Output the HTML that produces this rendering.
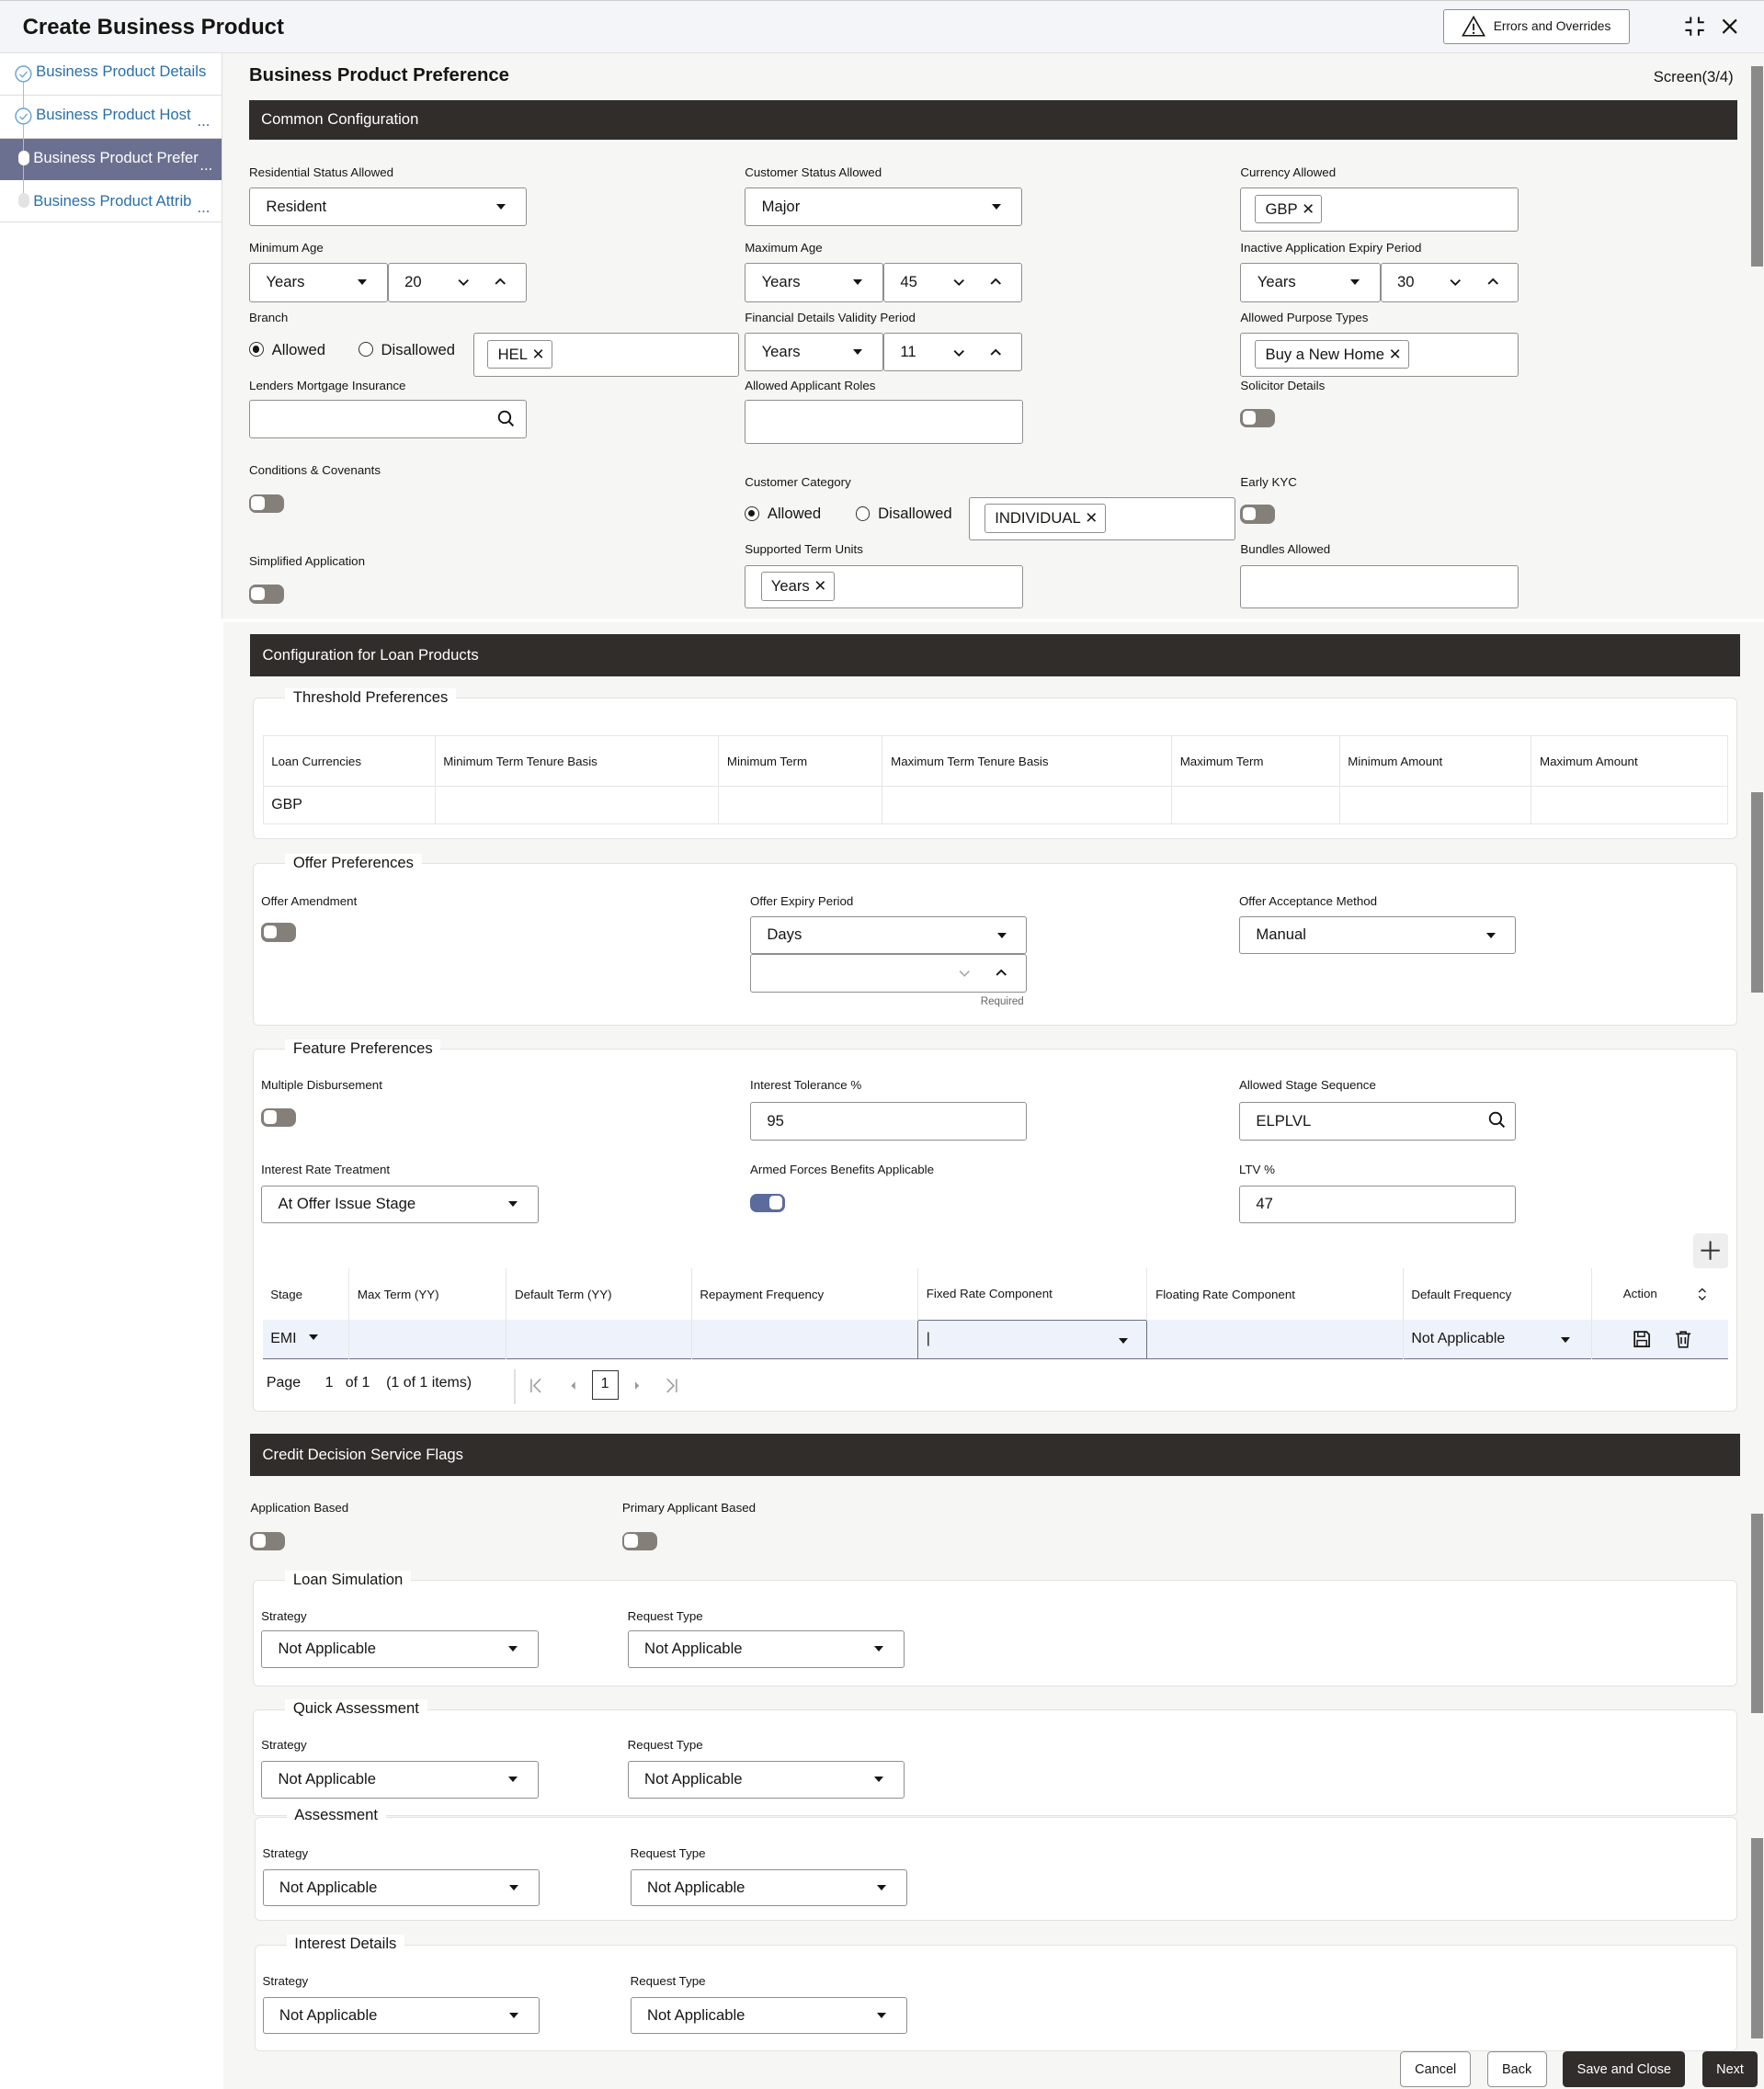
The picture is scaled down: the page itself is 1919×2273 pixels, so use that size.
<!DOCTYPE html>
<html><head><meta charset="utf-8">
<style>
*{box-sizing:border-box;margin:0;padding:0}
html,body{width:1919px;height:2273px;overflow:hidden;background:#fff}
#root{zoom:1.4494;width:1324px;height:1569px;position:relative;font-family:"Liberation Sans",sans-serif;color:#161513}
.a{position:absolute}
.lbl{position:absolute;font-size:9.2px;color:#161513;white-space:nowrap}
.box{position:absolute;background:#fff;border:1px solid #8f8f8f;border-radius:2px;font-size:11.5px;color:#161513;padding-left:12px;display:flex;align-items:center;white-space:nowrap}
.caret{position:absolute;top:50%;margin-top:-2px;width:0;height:0;border-left:3.5px solid transparent;border-right:3.5px solid transparent;border-top:4.5px solid #161513}
.tog{position:absolute;width:26px;height:14px;border-radius:5px;background:#857f7a;border:1px solid #857f7a}
.tog::after{content:"";position:absolute;left:1px;top:1px;width:10px;height:10px;border-radius:3px;background:#fff}
.tog.on{background:#5b6b9e;border-color:#5b6b9e}
.tog.on::after{left:auto;right:1px}
.bar{position:absolute;background:#312d2a;color:#fff;font-size:11.5px;padding-left:9px;display:flex;align-items:center}
.chip{position:absolute;border:1px solid #8f8f8f;border-radius:2px;background:#fff;font-size:11.5px;padding:0 5px 0 7px;display:flex;align-items:center;height:22px;white-space:nowrap}
.fs{position:absolute;border:1px solid #e2e2e2;border-radius:4px;background:#fff}
.leg{position:absolute;font-size:11.5px;background:#fff;padding:0 6px;white-space:nowrap;color:#161513}
.radio{position:absolute;width:11px;height:11px;border:1px solid #333;border-radius:50%;background:#fff}
.radio.on::after{content:"";position:absolute;left:2px;top:2px;width:5px;height:5px;border-radius:50%;background:#161513}
.rt{position:absolute;font-size:11.5px;color:#161513;white-space:nowrap}
.ch{position:absolute;top:50%;margin-top:-4px}
table{border-collapse:collapse;position:absolute;font-size:9.2px}
td{border-left:1px solid #e6e6e6;padding-left:6px;white-space:nowrap}
.btn{position:absolute;border:1px solid #8f8f8f;border-radius:3px;background:#fff;font-size:10px;display:flex;align-items:center;justify-content:center}
.btn.dk{background:#312d2a;color:#fff;border-color:#312d2a}
.sb{position:absolute;left:1314px;width:9px;background:#8a8a8a}
</style></head><body><div id="root">

<!-- header -->
<div class="a" style="left:0;top:0;width:1324px;height:40px;background:#f4f5f8;border-bottom:1px solid #e0e0e0;border-top:1px solid #ccc"></div>
<div class="a" style="left:17px;top:11px;font-size:16.5px;font-weight:bold">Create Business Product</div>
<div class="btn" style="left:1083px;top:7px;width:140px;height:26px;font-size:9.5px;border-radius:2px">
<svg width="18" height="16" viewBox="0 0 18 16" style="margin-right:6px"><path d="M9 1 L17 15 H1 Z" fill="none" stroke="#161513" stroke-width="1.1"/><line x1="9" y1="6" x2="9" y2="11" stroke="#161513" stroke-width="1.2"/><circle cx="9" cy="13" r="0.8" fill="#161513"/></svg>Errors and Overrides</div>
<svg class="a" style="left:1264px;top:12px" width="16" height="16" viewBox="0 0 16 16"><path d="M5 1v4H1M11 1v4h4M5 15v-4H1M11 15v-4h4" fill="none" stroke="#161513" stroke-width="1.4"/></svg>
<svg class="a" style="left:1292px;top:14px" width="12" height="12" viewBox="0 0 12 12"><path d="M1 1L11 11M11 1L1 11" stroke="#161513" stroke-width="1.5"/></svg>

<!-- sidebar -->
<div class="a" style="left:0;top:40px;width:167px;height:424px;background:#fff;border-right:1px solid #ddd"></div>
<div class="a" style="left:0;top:40px;width:166px;height:32px;border-bottom:1px solid #ddd"></div>
<div class="a" style="left:0;top:72px;width:166px;height:32px;border-bottom:1px solid #ddd"></div>
<div class="a" style="left:0;top:104px;width:166px;height:31px;background:#6c7090"></div>
<div class="a" style="left:0;top:135px;width:166px;height:32px;border-bottom:1px solid #ddd"></div>
<div class="a" style="left:17px;top:60px;width:1px;height:90px;background:#9fbfe0"></div>
<svg class="a" style="left:11px;top:49px" width="13" height="13" viewBox="0 0 13 13"><circle cx="6.5" cy="6.5" r="5.8" fill="#fff" stroke="#6aa3d3"/><path d="M3.8 6.8l2 2 3.6-4" fill="none" stroke="#6aa3d3" stroke-width="0.9"/></svg>
<svg class="a" style="left:11px;top:81px" width="13" height="13" viewBox="0 0 13 13"><circle cx="6.5" cy="6.5" r="5.8" fill="#fff" stroke="#6aa3d3"/><path d="M3.8 6.8l2 2 3.6-4" fill="none" stroke="#6aa3d3" stroke-width="0.9"/></svg>
<div class="a" style="left:14px;top:113px;width:8px;height:11px;border-radius:4px;background:#fff"></div>
<div class="a" style="left:14px;top:145px;width:8px;height:11px;border-radius:4px;background:#e3e3e3"></div>
<div class="a" style="left:27px;top:47px;font-size:11.5px;color:#2a6fa8">Business Product Details</div>
<div class="a" style="left:27px;top:79px;font-size:11.5px;color:#2a6fa8">Business Product Host</div>
<div class="a" style="left:148px;top:84px;font-size:11.5px;color:#2a6fa8">...</div>
<div class="a" style="left:25px;top:112px;font-size:11.5px;color:#fff">Business Product Prefer</div>
<div class="a" style="left:150px;top:117px;font-size:11.5px;color:#fff">...</div>
<div class="a" style="left:25px;top:144px;font-size:11.5px;color:#2a6fa8">Business Product Attrib</div>
<div class="a" style="left:148px;top:149px;font-size:11.5px;color:#2a6fa8">...</div>

<!-- content bg -->
<div class="a" style="left:167px;top:40px;width:1157px;height:424px;background:#f6f6f5"></div>
<div class="a" style="left:168px;top:467px;width:1156px;height:1102px;background:#f6f6f5"></div>

<div class="a" style="left:187px;top:49px;font-size:14px;font-weight:bold">Business Product Preference</div>
<div class="a" style="left:1241px;top:51px;font-size:11.5px">Screen(3/4)</div>

<div class="bar" style="left:187px;top:75px;width:1117px;height:30px">Common Configuration</div>

<!-- row 1 -->
<div class="lbl" style="left:187px;top:124px">Residential Status Allowed</div>
<div class="box" style="left:187px;top:141px;width:208px;height:29px">Resident<i class="caret" style="right:15px"></i></div>
<div class="lbl" style="left:559px;top:124px">Customer Status Allowed</div>
<div class="box" style="left:559px;top:141px;width:208px;height:29px">Major<i class="caret" style="right:15px"></i></div>
<div class="lbl" style="left:931px;top:124px">Currency Allowed</div>
<div class="box" style="left:931px;top:141px;width:209px;height:33px"></div>
<div class="chip" style="left:942px;top:146px">GBP&nbsp;✕</div>

<!-- row 2 -->
<div class="lbl" style="left:187px;top:181px">Minimum Age</div>
<div class="box" style="left:187px;top:197px;width:104px;height:30px">Years<i class="caret" style="right:15px"></i></div>
<div class="box" style="left:291px;top:197px;width:104px;height:30px">20<svg class="ch" style="left:51px" width="10" height="8" viewBox="0 0 10 8"><path d="M1.5 2.5L5 6 8.5 2.5" fill="none" stroke="#161513" stroke-width="1.3"/></svg><svg class="ch" style="left:79px" width="10" height="8" viewBox="0 0 10 8"><path d="M1.5 5.5L5 2 8.5 5.5" fill="none" stroke="#161513" stroke-width="1.3"/></svg></div>
<div class="lbl" style="left:559px;top:181px">Maximum Age</div>
<div class="box" style="left:559px;top:197px;width:104px;height:30px">Years<i class="caret" style="right:15px"></i></div>
<div class="box" style="left:663px;top:197px;width:104px;height:30px">45<svg class="ch" style="left:51px" width="10" height="8" viewBox="0 0 10 8"><path d="M1.5 2.5L5 6 8.5 2.5" fill="none" stroke="#161513" stroke-width="1.3"/></svg><svg class="ch" style="left:79px" width="10" height="8" viewBox="0 0 10 8"><path d="M1.5 5.5L5 2 8.5 5.5" fill="none" stroke="#161513" stroke-width="1.3"/></svg></div>
<div class="lbl" style="left:931px;top:181px">Inactive Application Expiry Period</div>
<div class="box" style="left:931px;top:197px;width:105px;height:30px">Years<i class="caret" style="right:15px"></i></div>
<div class="box" style="left:1036px;top:197px;width:104px;height:30px">30<svg class="ch" style="left:51px" width="10" height="8" viewBox="0 0 10 8"><path d="M1.5 2.5L5 6 8.5 2.5" fill="none" stroke="#161513" stroke-width="1.3"/></svg><svg class="ch" style="left:79px" width="10" height="8" viewBox="0 0 10 8"><path d="M1.5 5.5L5 2 8.5 5.5" fill="none" stroke="#161513" stroke-width="1.3"/></svg></div>

<!-- row 3 -->
<div class="lbl" style="left:187px;top:233px">Branch</div>
<div class="radio on" style="left:187px;top:257px"></div><div class="rt" style="left:204px;top:256px">Allowed</div>
<div class="radio" style="left:269px;top:257px"></div><div class="rt" style="left:286px;top:256px">Disallowed</div>
<div class="box" style="left:355px;top:250px;width:200px;height:33px"></div>
<div class="chip" style="left:366px;top:255px">HEL&nbsp;✕</div>
<div class="lbl" style="left:559px;top:233px">Financial Details Validity Period</div>
<div class="box" style="left:559px;top:250px;width:104px;height:29px">Years<i class="caret" style="right:15px"></i></div>
<div class="box" style="left:663px;top:250px;width:104px;height:29px">11<svg class="ch" style="left:51px" width="10" height="8" viewBox="0 0 10 8"><path d="M1.5 2.5L5 6 8.5 2.5" fill="none" stroke="#161513" stroke-width="1.3"/></svg><svg class="ch" style="left:79px" width="10" height="8" viewBox="0 0 10 8"><path d="M1.5 5.5L5 2 8.5 5.5" fill="none" stroke="#161513" stroke-width="1.3"/></svg></div>
<div class="lbl" style="left:931px;top:233px">Allowed Purpose Types</div>
<div class="box" style="left:931px;top:250px;width:209px;height:33px"></div>
<div class="chip" style="left:942px;top:255px">Buy a New Home&nbsp;✕</div>

<!-- row 4 -->
<div class="lbl" style="left:187px;top:284px">Lenders Mortgage Insurance</div>
<div class="box" style="left:187px;top:300px;width:208px;height:29px"></div>
<svg class="a" style="left:373px;top:308px" width="13" height="13" viewBox="0 0 13 13"><circle cx="5.5" cy="5.5" r="4.3" fill="none" stroke="#161513" stroke-width="1.3"/><path d="M8.6 8.6L12 12" stroke="#161513" stroke-width="1.4"/></svg>
<div class="lbl" style="left:559px;top:284px">Allowed Applicant Roles</div>
<div class="box" style="left:559px;top:300px;width:209px;height:33px"></div>
<div class="lbl" style="left:931px;top:284px">Solicitor Details</div>
<div class="tog" style="left:931px;top:307px"></div>

<div class="lbl" style="left:187px;top:348px">Conditions &amp; Covenants</div>
<div class="tog" style="left:187px;top:371px"></div>
<div class="lbl" style="left:559px;top:357px">Customer Category</div>
<div class="radio on" style="left:559px;top:380px"></div><div class="rt" style="left:576px;top:379px">Allowed</div>
<div class="radio" style="left:642px;top:380px"></div><div class="rt" style="left:659px;top:379px">Disallowed</div>
<div class="box" style="left:727px;top:373px;width:200px;height:33px"></div>
<div class="chip" style="left:739px;top:378px">INDIVIDUAL&nbsp;✕</div>
<div class="lbl" style="left:931px;top:357px">Early KYC</div>
<div class="tog" style="left:931px;top:379px"></div>

<div class="lbl" style="left:187px;top:416px">Simplified Application</div>
<div class="tog" style="left:187px;top:439px"></div>
<div class="lbl" style="left:559px;top:407px">Supported Term Units</div>
<div class="box" style="left:559px;top:424px;width:209px;height:33px"></div>
<div class="chip" style="left:571px;top:429px">Years&nbsp;✕</div>
<div class="lbl" style="left:931px;top:407px">Bundles Allowed</div>
<div class="box" style="left:931px;top:424px;width:209px;height:33px"></div>

<!-- Loan products -->
<div class="bar" style="left:188px;top:476px;width:1118px;height:32px">Configuration for Loan Products</div>

<div class="fs" style="left:190px;top:524px;width:1114px;height:106px"></div>
<div class="leg" style="left:214px;top:517px">Threshold Preferences</div>
<table style="left:197px;top:552px;width:1100px;background:#fff;border:1px solid #e6e6e6">
<tr style="height:38px;border-bottom:1px solid #e6e6e6"><td style="width:129px;border-left:none">Loan Currencies</td><td style="width:213px">Minimum Term Tenure Basis</td><td style="width:123px">Minimum Term</td><td style="width:217px">Maximum Term Tenure Basis</td><td style="width:126px">Maximum Term</td><td style="width:144px">Minimum Amount</td><td>Maximum Amount</td></tr>
<tr style="height:28px"><td style="border-left:none;font-size:11px">GBP</td><td></td><td></td><td></td><td></td><td></td><td></td></tr>
</table>

<div class="fs" style="left:190px;top:648px;width:1114px;height:122px"></div>
<div class="leg" style="left:214px;top:641px">Offer Preferences</div>
<div class="lbl" style="left:196px;top:671px">Offer Amendment</div>
<div class="tog" style="left:196px;top:693px"></div>
<div class="lbl" style="left:563px;top:671px">Offer Expiry Period</div>
<div class="box" style="left:563px;top:688px;width:208px;height:28px">Days<i class="caret" style="right:15px"></i></div>
<div class="box" style="left:563px;top:716px;width:208px;height:29px"><svg class="ch" style="left:155px" width="10" height="8" viewBox="0 0 10 8"><path d="M1.5 2.5L5 6 8.5 2.5" fill="none" stroke="#aaa" stroke-width="1.1"/></svg><svg class="ch" style="left:183px" width="10" height="8" viewBox="0 0 10 8"><path d="M1.5 5.5L5 2 8.5 5.5" fill="none" stroke="#161513" stroke-width="1.3"/></svg></div>
<div class="lbl" style="left:736px;top:748px;font-size:8px;color:#666">Required</div>
<div class="lbl" style="left:930px;top:671px">Offer Acceptance Method</div>
<div class="box" style="left:930px;top:688px;width:208px;height:28px">Manual<i class="caret" style="right:15px"></i></div>

<div class="fs" style="left:190px;top:787px;width:1114px;height:273px"></div>
<div class="leg" style="left:214px;top:780px">Feature Preferences</div>
<div class="lbl" style="left:196px;top:809px">Multiple Disbursement</div>
<div class="tog" style="left:196px;top:832px"></div>
<div class="lbl" style="left:563px;top:809px">Interest Tolerance %</div>
<div class="box" style="left:563px;top:827px;width:208px;height:29px">95</div>
<div class="lbl" style="left:930px;top:809px">Allowed Stage Sequence</div>
<div class="box" style="left:930px;top:827px;width:208px;height:29px">ELPLVL</div>
<svg class="a" style="left:1117px;top:834px" width="13" height="13" viewBox="0 0 13 13"><circle cx="5.5" cy="5.5" r="4.3" fill="none" stroke="#161513" stroke-width="1.3"/><path d="M8.6 8.6L12 12" stroke="#161513" stroke-width="1.4"/></svg>
<div class="lbl" style="left:196px;top:873px">Interest Rate Treatment</div>
<div class="box" style="left:196px;top:890px;width:208px;height:28px">At Offer Issue Stage<i class="caret" style="right:15px"></i></div>
<div class="lbl" style="left:563px;top:873px">Armed Forces Benefits Applicable</div>
<div class="tog on" style="left:563px;top:896px"></div>
<div class="lbl" style="left:930px;top:873px">LTV %</div>
<div class="box" style="left:930px;top:890px;width:208px;height:28px">47</div>
<div class="a" style="left:1271px;top:926px;width:26px;height:26px;background:#eee;border-radius:3px"></div>
<svg class="a" style="left:1276px;top:931px" width="16" height="16" viewBox="0 0 16 16"><path d="M8 1v14M1 8h14" stroke="#333" stroke-width="1.4"/></svg>

<table style="left:197px;top:952px;width:1100px;background:#fff">
<tr style="height:39px"><td style="width:65px;border-left:none">Stage</td><td style="width:118px">Max Term (YY)</td><td style="width:139px">Default Term (YY)</td><td style="width:170px">Repayment Frequency</td><td style="width:172px">Fixed Rate Component</td><td style="width:192px">Floating Rate Component</td><td style="width:142px">Default Frequency</td><td style="padding-left:23px">Action<svg style="margin-left:30px;vertical-align:middle" width="8" height="10" viewBox="0 0 8 10"><path d="M1.5 3.5L4 1 6.5 3.5M1.5 6.5L4 9 6.5 6.5" fill="none" stroke="#161513" stroke-width="0.9"/></svg></td></tr>
<tr style="height:29px;background:#eef2fb;border-bottom:1px solid #6b6f80;font-size:11px"><td style="border-left:none;font-size:11px">EMI &nbsp;<i class="caret" style="position:relative;display:inline-block;top:-2px;margin-left:3px"></i></td><td></td><td></td><td></td><td style="border:1px solid #6b6f80;font-size:11px">|<i class="caret" style="position:relative;display:inline-block;float:right;top:7px;margin-right:14px"></i></td><td></td><td style="font-size:11px">Not Applicable<i class="caret" style="position:relative;display:inline-block;float:right;top:7px;margin-right:16px"></i></td><td style="padding-left:30px">
<svg width="14" height="14" viewBox="0 0 14 14" style="vertical-align:middle"><path d="M1.5 1.5h9l2 2v9h-11z" fill="none" stroke="#161513" stroke-width="1.2"/><rect x="4" y="1.5" width="5" height="3.5" fill="none" stroke="#161513" stroke-width="1"/><rect x="3.5" y="8" width="7" height="4.5" fill="none" stroke="#161513" stroke-width="1"/></svg>
<svg width="14" height="14" viewBox="0 0 14 14" style="vertical-align:middle;margin-left:14px"><path d="M1.5 3h11M5 3V1.5h4V3M3 3l.8 10h6.4L11 3M5.5 5.5v5M8.5 5.5v5" fill="none" stroke="#161513" stroke-width="1.1"/></svg></td></tr>
</table>
<div class="a" style="left:200px;top:1032px;font-size:11px;white-space:nowrap">Page &nbsp; &nbsp; &nbsp;1 &nbsp; of 1 &nbsp; &nbsp;(1 of 1 items)</div>
<div class="a" style="left:386px;top:1028px;width:1px;height:26px;background:#e0e0e0"></div>
<svg class="a" style="left:397px;top:1034px" width="120" height="12" viewBox="0 0 120 12"><path d="M2 1v10M9 1L4 6l5 5" fill="none" stroke="#999" stroke-width="1"/><path d="M35 3l-3 3 3 3z" fill="#999"/><path d="M80 3l3 3-3 3z" fill="#999"/><path d="M104 1l5 5-5 5M111 1v10" fill="none" stroke="#999" stroke-width="1"/></svg>
<div class="a" style="left:444px;top:1029px;width:20px;height:22px;border:1px solid #333;font-size:11px;text-align:center;line-height:20px;background:#fff">1</div>

<!-- credit decision -->
<div class="bar" style="left:188px;top:1076px;width:1118px;height:32px">Credit Decision Service Flags</div>
<div class="lbl" style="left:188px;top:1127px">Application Based</div>
<div class="tog" style="left:188px;top:1150px"></div>
<div class="lbl" style="left:467px;top:1127px">Primary Applicant Based</div>
<div class="tog" style="left:467px;top:1150px"></div>

<div class="fs" style="left:190px;top:1186px;width:1114px;height:80px"></div>
<div class="leg" style="left:214px;top:1179px">Loan Simulation</div>
<div class="lbl" style="left:196px;top:1208px">Strategy</div>
<div class="box" style="left:196px;top:1224px;width:208px;height:28px">Not Applicable<i class="caret" style="right:15px"></i></div>
<div class="lbl" style="left:471px;top:1208px">Request Type</div>
<div class="box" style="left:471px;top:1224px;width:208px;height:28px">Not Applicable<i class="caret" style="right:15px"></i></div>

<div class="fs" style="left:190px;top:1283px;width:1114px;height:80px"></div>
<div class="leg" style="left:214px;top:1276px">Quick Assessment</div>
<div class="lbl" style="left:196px;top:1305px">Strategy</div>
<div class="box" style="left:196px;top:1322px;width:208px;height:28px">Not Applicable<i class="caret" style="right:15px"></i></div>
<div class="lbl" style="left:471px;top:1305px">Request Type</div>
<div class="box" style="left:471px;top:1322px;width:208px;height:28px">Not Applicable<i class="caret" style="right:15px"></i></div>

<div class="fs" style="left:191px;top:1364px;width:1113px;height:78px"></div>
<div class="leg" style="left:215px;top:1356px">Assessment</div>
<div class="lbl" style="left:197px;top:1386px">Strategy</div>
<div class="box" style="left:197px;top:1403px;width:208px;height:28px">Not Applicable<i class="caret" style="right:15px"></i></div>
<div class="lbl" style="left:473px;top:1386px">Request Type</div>
<div class="box" style="left:473px;top:1403px;width:208px;height:28px">Not Applicable<i class="caret" style="right:15px"></i></div>

<div class="fs" style="left:191px;top:1460px;width:1113px;height:80px"></div>
<div class="leg" style="left:215px;top:1452px">Interest Details</div>
<div class="lbl" style="left:197px;top:1482px">Strategy</div>
<div class="box" style="left:197px;top:1499px;width:208px;height:28px">Not Applicable<i class="caret" style="right:15px"></i></div>
<div class="lbl" style="left:473px;top:1482px">Request Type</div>
<div class="box" style="left:473px;top:1499px;width:208px;height:28px">Not Applicable<i class="caret" style="right:15px"></i></div>

<!-- buttons -->
<div class="btn" style="left:1051px;top:1540px;width:53px;height:27px">Cancel</div>
<div class="btn" style="left:1116px;top:1540px;width:45px;height:27px">Back</div>
<div class="btn dk" style="left:1173px;top:1540px;width:92px;height:27px">Save and Close</div>
<div class="btn dk" style="left:1278px;top:1540px;width:41px;height:27px">Next</div>

<!-- scrollbars -->
<div class="sb" style="top:50px;height:150px"></div>
<div class="sb" style="top:595px;height:150px"></div>
<div class="sb" style="top:1136px;height:150px"></div>
<div class="sb" style="top:1380px;height:150px"></div>
</div></body></html>
